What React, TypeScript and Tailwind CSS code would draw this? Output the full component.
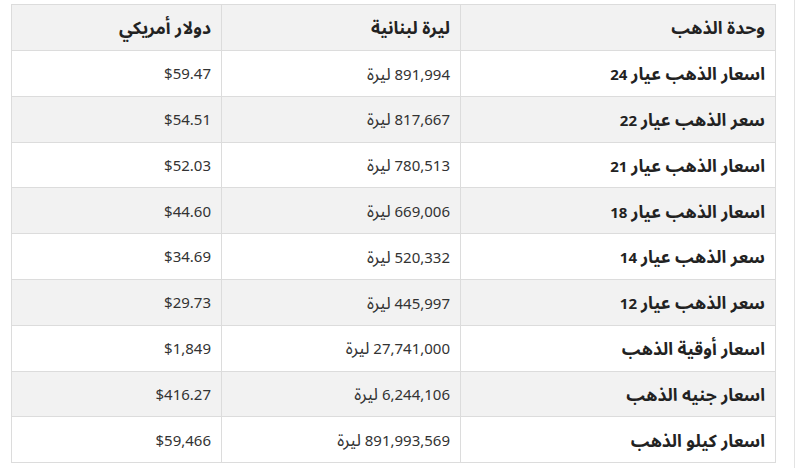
import React from 'react';

// Arabic runs are set a little larger than the digits, like the source font
const rows = [
    { unit: 'اسعار الذهب عيار', karat: '24', lbp: '891,994', usd: '$59.47' },
    { unit: 'سعر الذهب عيار', karat: '22', lbp: '817,667', usd: '$54.51' },
    { unit: 'اسعار الذهب عيار', karat: '21', lbp: '780,513', usd: '$52.03' },
    { unit: 'اسعار الذهب عيار', karat: '18', lbp: '669,006', usd: '$44.60' },
    { unit: 'سعر الذهب عيار', karat: '14', lbp: '520,332', usd: '$34.69' },
    { unit: 'سعر الذهب عيار', karat: '12', lbp: '445,997', usd: '$29.73' },
    { unit: 'اسعار أوقية الذهب', karat: '', lbp: '27,741,000', usd: '$1,849' },
    { unit: 'اسعار جنيه الذهب', karat: '', lbp: '6,244,106', usd: '$416.27' },
    { unit: 'اسعار كيلو الذهب', karat: '', lbp: '891,993,569', usd: '$59,466' },
];

const cell = 'border border-[#dcdcdc] px-[10px] text-right';

export default function App(): React.JSX.Element {
    return (
        <div
            className="w-[795px] h-[468px] border-r border-[#e3e3e3] bg-white pt-[4px] pl-[11px]"
            style={{ fontFamily: '"Noto Sans", "Noto Sans Arabic", "DejaVu Sans", sans-serif' }}
        >
            <table dir="rtl" className="w-[764px] border-collapse table-fixed text-[15px] text-[#333]">
                <colgroup>
                    <col className="w-[315px]" />
                    <col className="w-[239px]" />
                    <col className="w-[210px]" />
                </colgroup>
                <thead>
                    <tr className="h-[46px] bg-[#f2f2f2] text-[17.5px] font-bold text-[#222]">
                        <th className={cell}>وحدة الذهب</th>
                        <th className={cell}>ليرة لبنانية</th>
                        <th className={cell}>دولار أمريكي</th>
                    </tr>
                </thead>
                <tbody>
                    {rows.map((r, i) => (
                        <tr key={i} className={i % 2 === 1 ? 'h-[45.8px] bg-[#f2f2f2]' : 'h-[45.8px] bg-white'}>
                            <td className={`${cell} font-bold text-[#222]`}>
                                <span className="text-[17.5px]">{r.unit}</span>
                                {r.karat && <span> {r.karat}</span>}
                            </td>
                            <td className={cell}>
                                {r.lbp} <span className="text-[17px]">ليرة</span>
                            </td>
                            <td className={cell}>{r.usd}</td>
                        </tr>
                    ))}
                </tbody>
            </table>
        </div>
    );
}
